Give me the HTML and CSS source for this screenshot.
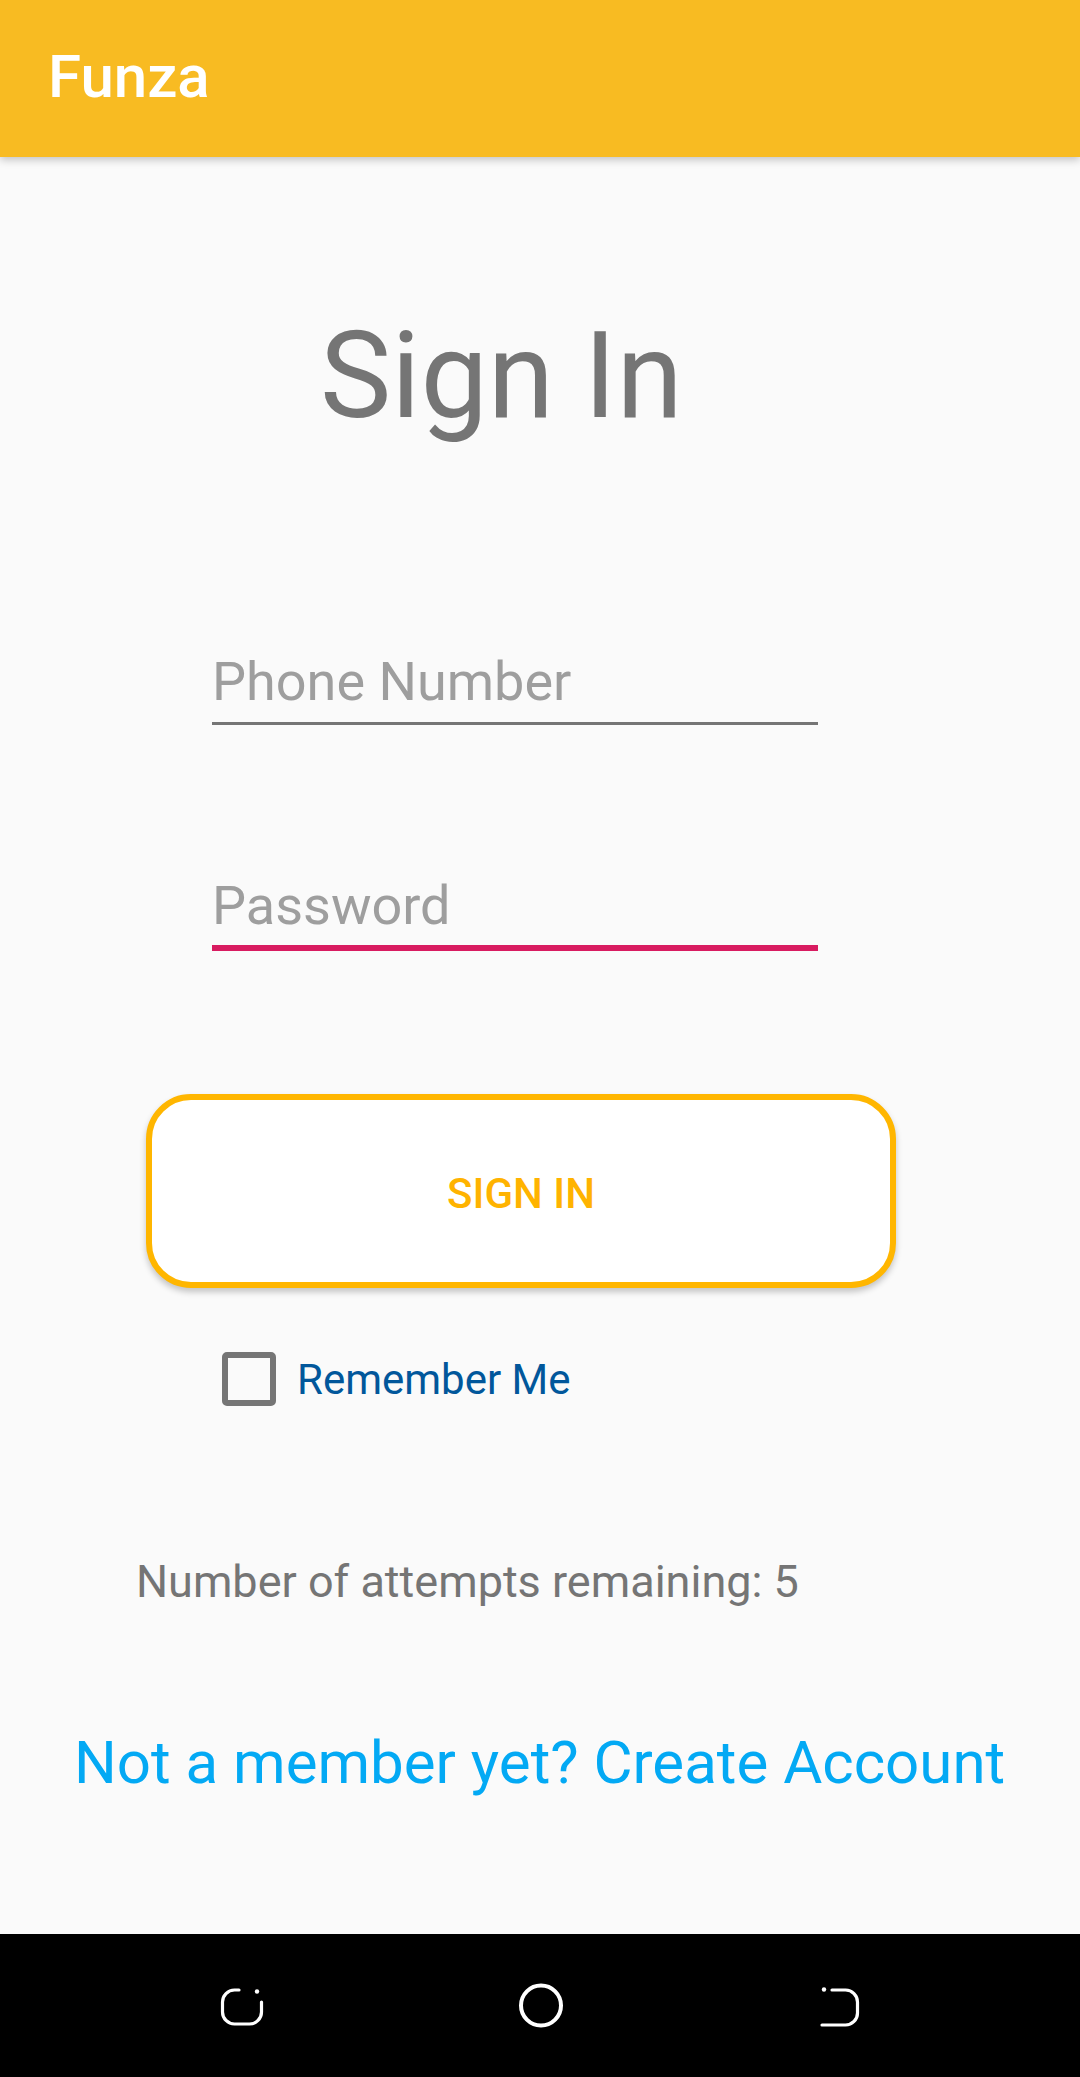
FILE: index.html
```html
<!DOCTYPE html>
<html lang="en">
<head>
<meta charset="utf-8">
<title>Funza - Sign In</title>
<link rel="stylesheet" href="styles.css">
</head>
<body>
<div class="screen">
  <header class="appbar">
    <h1 class="appbar-title">Funza</h1>
  </header>
  <main class="content">
    <h2 class="title">Sign In</h2>
    <input class="field field-phone" type="tel" placeholder="Phone Number">
    <input class="field field-password" type="password" placeholder="Password">
    <button class="signin-btn" type="button">SIGN IN</button>
    <label class="remember">
      <span class="checkbox"></span>
      <span class="remember-text">Remember Me</span>
    </label>
    <p class="attempts">Number of attempts remaining: 5</p>
    <a class="create-link" href="#">Not a member yet? Create Account</a>
  </main>
  <nav class="navbar">
    <svg class="nav-icon" width="48" height="48" viewBox="0 0 48 48">
      <path d="M21 8 H16.5 A12 12 0 0 0 4.5 20 V30 A12 12 0 0 0 16.5 42 H31.5 A12 12 0 0 0 43.5 30 V20" fill="none" stroke="#fff" stroke-width="3.2" stroke-linecap="round"/>
      <circle cx="39" cy="9.5" r="2.2" fill="#fff"/>
    </svg>
    <svg class="nav-icon" width="48" height="48" viewBox="0 0 48 48">
      <circle cx="24" cy="23.5" r="20" fill="none" stroke="#fff" stroke-width="4"/>
    </svg>
    <svg class="nav-icon" width="48" height="48" viewBox="0 0 48 48">
      <path d="M16 8 H29.5 A12 12 0 0 1 41.5 20 V31 A12 12 0 0 1 29.5 43 H6" fill="none" stroke="#fff" stroke-width="3.2" stroke-linecap="round"/>
      <circle cx="8" cy="7.5" r="2.2" fill="#fff"/>
    </svg>
  </nav>
</div>
</body>
</html>
```
FILE: styles.css
```css
* {
  box-sizing: border-box;
}

html, body {
  margin: 0;
  padding: 0;
}

body {
  font-family: Roboto, "Noto Sans", "Liberation Sans", sans-serif;
  background: #fafafa;
}

.screen {
  width: 1080px;
  height: 2077px;
  display: flex;
  flex-direction: column;
  overflow: hidden;
}

.appbar {
  position: relative;
  z-index: 2;
  height: 157px;
  flex: 0 0 157px;
  background: #f8bb22;
  display: flex;
  align-items: center;
  padding: 0 0 3px 48px;
  box-shadow: 0 3px 8px rgba(0, 0, 0, 0.22);
}

.appbar-title {
  margin: 0;
  font-size: 60px;
  font-weight: 500;
  line-height: 70px;
  color: #ffffff;
}

.content {
  flex: 1;
  display: flex;
  flex-direction: column;
  align-items: flex-start;
}

.title {
  margin: 159px 0 0 320px;
  font-size: 120px;
  line-height: 120px;
  font-weight: 400;
  color: #757575;
}

.field {
  display: block;
  width: 606px;
  height: auto;
  margin-left: 212px;
  padding: 0 0 8px 0;
  border: none;
  border-bottom: 3px solid #757575;
  border-radius: 0;
  background: transparent;
  font-family: Roboto, "Noto Sans", "Liberation Sans", sans-serif;
  font-size: 54px;
  line-height: 64px;
  color: #212121;
  outline: none;
}

.field::placeholder {
  color: #9e9e9e;
  opacity: 1;
}

.field-phone {
  margin-top: 214px;
}

.field-password {
  margin-top: 149px;
  padding-bottom: 7px;
  border-bottom: 6px solid #d81b60;
}

.signin-btn {
  margin: 143px 0 0 146px;
  width: 750px;
  height: 194px;
  border: 6px solid #ffb600;
  border-radius: 45px;
  background: #ffffff;
  box-shadow: 0 4px 6px rgba(0, 0, 0, 0.22);
  font-family: Roboto, "Noto Sans", "Liberation Sans", sans-serif;
  font-size: 42px;
  font-weight: 500;
  letter-spacing: 0;
  color: #ffb300;
  display: flex;
  align-items: center;
  justify-content: center;
  padding: 4px 0 0 0;
  cursor: pointer;
}

.remember {
  margin: 64px 0 0 222px;
  display: flex;
  align-items: center;
  gap: 21px;
  height: 54px;
}

.checkbox {
  width: 54px;
  height: 54px;
  border: 6px solid #757575;
  border-radius: 5px;
}

.remember-text {
  font-size: 42px;
  line-height: 54px;
  color: #01579b;
  padding-top: 2px;
}

.attempts {
  margin: 149px 0 0 136px;
  font-size: 45px;
  line-height: 54px;
  color: #757575;
}

.create-link {
  margin: 119px 0 0 74px;
  font-size: 60px;
  line-height: 70px;
  color: #03a9f4;
  text-decoration: none;
}

.navbar {
  height: 143px;
  flex: 0 0 143px;
  background: #000000;
  display: flex;
  align-items: center;
  justify-content: center;
  gap: 251px;
  padding-left: 2px;
}

.nav-icon {
  display: block;
}
```
